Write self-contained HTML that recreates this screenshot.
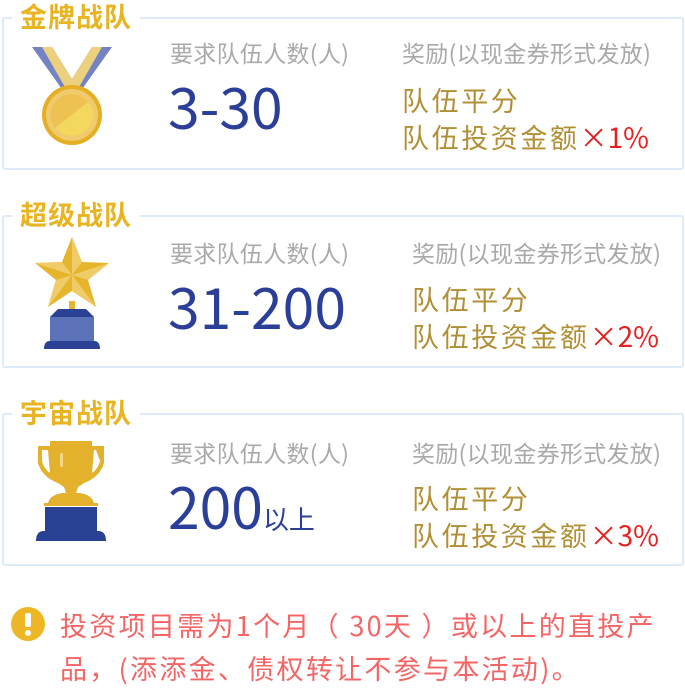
<!DOCTYPE html>
<html><head><meta charset="utf-8"><style>
*{margin:0;padding:0;box-sizing:border-box}
body{width:685px;height:687px;background:#fff;position:relative;overflow:hidden;font-family:"Noto Sans CJK SC","Liberation Sans",sans-serif}
.box{position:absolute;left:2px;width:682px;height:153px;border:2px solid #deebfb;border-radius:3px}
.title{position:absolute;left:8px;top:-22px;background:#fff;padding:0 8px;font-size:27px;font-weight:bold;color:#e9b422;line-height:38px;letter-spacing:1px}
.lab{position:absolute;font-size:23px;letter-spacing:.3px;color:#a9a9a9;white-space:nowrap;line-height:24px}
.num{position:absolute;left:164px;font-size:57px;color:#2b3f99;line-height:60px;white-space:nowrap}
.num small{font-size:26px}
.gold{position:absolute;font-size:27px;letter-spacing:2.6px;color:#b08f35;line-height:37px;white-space:nowrap}
.gold b{font-weight:normal;color:#e42222;letter-spacing:0;font-size:28px}
.icon{position:absolute}
.note{position:absolute;left:60px;top:603px;width:640px;font-size:27px;line-height:43px;color:#f46565;letter-spacing:2.3px;white-space:nowrap}
</style></head><body>

<div class="box" style="top:17px">
 <div class="title">金牌战队</div>
 <svg class="icon" style="left:26px;top:28px" width="84" height="100" viewBox="0 0 84 100">
  <polygon points="2,0 22,0 42,32 62,0 82,0 50,45 34,45" fill="#7484c2"/>
  <polygon points="12,0 22,0 42,32 62,0 72,0 48,42 36,42" fill="#ecd07e"/>
  <circle cx="42" cy="68" r="30" fill="#e6ae22"/>
  <circle cx="42" cy="68" r="26" fill="#efcb6e"/>
  <circle cx="42" cy="68" r="21" fill="#f3d75f"/>
  <path d="M25,81 A21,21 0 0 1 58,55 Z" fill="#edc253"/>
 </svg>
 <div class="lab" style="left:166px;top:21px">要求队伍人数(人)</div>
 <div class="num" style="top:56px">3-30</div>
 <div class="lab" style="left:398px;top:21px">奖励(以现金券形式发放)</div>
 <div class="gold" style="left:398px;top:62px">队伍平分<br>队伍投资金额<b>×1%</b></div>
</div>

<div class="box" style="top:215px">
 <div class="title">超级战队</div>
 <svg class="icon" style="left:28px;top:20px" width="80" height="112" viewBox="0 0 80 112">
  <polygon points="40,0 50,25 77,26 56,43 64,70 40,54 16,70 24,43 3,26 30,25" fill="#e6b52c"/>
  <polygon points="40,0 40,38 50,25" fill="#f0cc68"/>
  <polygon points="77,26 40,38 56,43" fill="#f0cc68"/>
  <polygon points="64,70 40,38 40,54" fill="#f0cc68"/>
  <polygon points="16,70 40,38 24,43" fill="#f0cc68"/>
  <polygon points="3,26 40,38 30,25" fill="#f0cc68"/>
  <rect x="37" y="64" width="6" height="8" fill="#e6b52c"/>
  <polygon points="26,72 54,72 62,80 18,80" fill="#2a4194"/>
  <rect x="18" y="80" width="44" height="24" fill="#5b72b8"/>
  <path d="M12,112 Q12,104 18,104 L62,104 Q68,104 68,112 Z" fill="#2a4194"/>
 </svg>
 <div class="lab" style="left:166px;top:23px">要求队伍人数(人)</div>
 <div class="num" style="top:58px">31-200</div>
 <div class="lab" style="left:408px;top:23px">奖励(以现金券形式发放)</div>
 <div class="gold" style="left:408px;top:63px">队伍平分<br>队伍投资金额<b>×2%</b></div>
</div>

<div class="box" style="top:413px">
 <div class="title">宇宙战队</div>
 <svg class="icon" style="left:30px;top:26px" width="76" height="100" viewBox="0 0 76 100">
  <path d="M12,0 L58,0 L58,5 L70,5 L70,22 Q66,36 50,42 L44,46 L42,52 L46,52 Q58,54 60,62 L64,62 L64,65 L10,65 L10,62 L14,62 Q16,54 28,52 L32,52 L30,46 L24,42 Q8,36 4,22 L4,5 L16,5 L16,0 Z M8,9 L8,20 Q10,28 16,32 L14,9 Z M62,9 L60,9 L58,32 Q64,28 66,20 Z" fill="#e3b12c" fill-rule="evenodd"/>
  <rect x="26" y="12" width="3" height="14" rx="1.5" fill="#f2d98a"/>
  <rect x="11" y="66" width="52" height="24" fill="#284193"/>
  <path d="M2,100 Q2,90 10,90 L64,90 Q72,90 72,100 Z" fill="#284193"/>
 </svg>
 <div class="lab" style="left:166px;top:25px">要求队伍人数(人)</div>
 <div class="num" style="top:60px">200<small>以上</small></div>
 <div class="lab" style="left:408px;top:25px">奖励(以现金券形式发放)</div>
 <div class="gold" style="left:408px;top:64px">队伍平分<br>队伍投资金额<b>×3%</b></div>
</div>

<svg class="icon" style="left:11px;top:607px" width="34" height="34" viewBox="0 0 34 34">
 <circle cx="17" cy="17" r="17" fill="#ecb624"/>
 <rect x="14" y="6" width="6" height="14" rx="2" fill="#fff"/>
 <circle cx="17" cy="26" r="3" fill="#fff"/>
</svg>
<div class="note">投资项目需为1个月（ 30天 ）或以上的直投产<br>品，(添添金、债权转让不参与本活动)。</div>
</body></html>
